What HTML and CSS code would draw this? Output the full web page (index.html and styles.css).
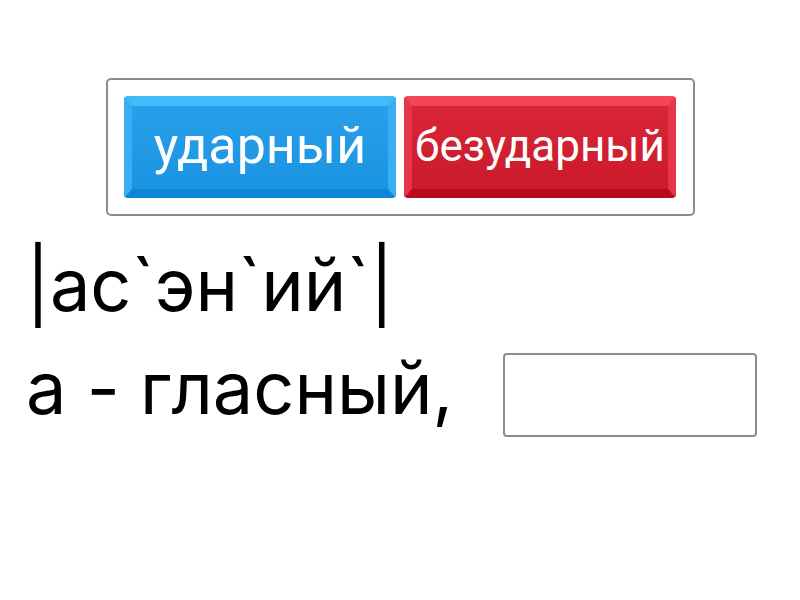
FILE: index.html
```html
<!DOCTYPE html>
<html lang="ru">
<head>
<meta charset="utf-8">
<link rel="stylesheet" href="styles.css">
</head>
<body>
<div class="page">
  <div class="choices">
    <div class="btn btn-blue"><span class="label label-big">ударный</span></div>
    <div class="btn btn-red"><span class="label label-small">безударный</span></div>
  </div>
  <div class="line line-one">|ас`эн`ий`|</div>
  <div class="line line-two"><span>а - гласный,</span><div class="slot"></div></div>
</div>
</body>
</html>
```
FILE: styles.css
```css
html, body { margin: 0; padding: 0; background: #fff; }
body { width: 800px; height: 600px; overflow: hidden; font-family: Inter, "Noto Sans", sans-serif; }
.page { display: flex; flex-direction: column; align-items: flex-start; padding: 78px 0 0 26px; }
.choices {
  margin-left: 80px;
  display: flex; gap: 8px;
  padding: 16px;
  border: 2px solid #8c8c8c; border-radius: 5px;
  width: 553px;
}
.btn {
  box-sizing: border-box;
  width: 272px; height: 102px;
  display: flex; align-items: center; justify-content: center;
  border-style: solid; border-width: 10px 8px 9px 8px; border-radius: 4px;
  color: #fff; font-family: Roboto, "Liberation Sans", sans-serif;
}
.btn-blue {
  background: linear-gradient(#2a9fe9, #1a94e2);
  border-color: #43bbfa #3aaef5 #0d87d5 #3aaef5;
}
.btn-red {
  background: linear-gradient(#d92538, #cb1a2c);
  border-color: #f24556 #e63547 #b90b20 #e63547;
}
.label { line-height: 1; }
.label-big { font-size: 52px; margin-top: -4px; }
.label-small { font-size: 44px; margin-top: -4px; }
.line { font-size: 72px; color: #000; line-height: 1; }
.line-one { margin-top: 33px; }
.line-two { display: flex; align-items: flex-start; gap: 50px; margin-top: 31px; }
.slot { width: 250px; height: 80px; margin-top: 1px; border: 2px solid #8c8c8c; border-radius: 4px; box-sizing: content-box; }
```
